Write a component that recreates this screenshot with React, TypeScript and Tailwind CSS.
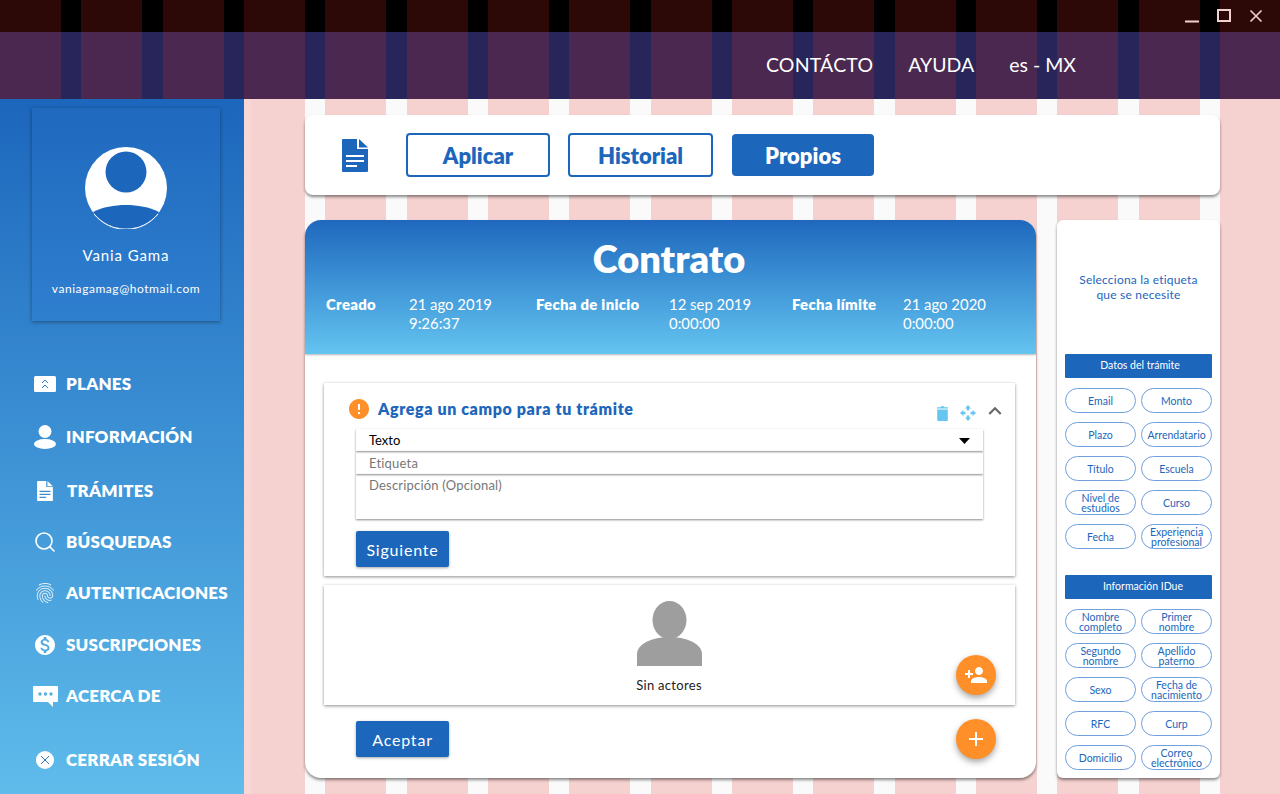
import { Search } from "lucide-react";
import { MdAdd, MdError, MdExpandLess, MdFingerprint, MdMonetizationOn, MdPersonAdd } from "react-icons/md";

const navItems = [
  { label: "PLANES", icon: <PlansIcon />, row: "" },
  { label: "INFORMACIÓN", icon: <PersonIcon />, row: "mt-[13px]" },
  { label: "TRÁMITES", icon: <DocIcon size="h-[20px] w-[16px]" body="#fff" lines="#3b8ad4" />, row: "mt-[14px] pl-[1px]" },
  { label: "BÚSQUEDAS", icon: <Search size={24} strokeWidth={1.6} />, row: "mt-[11px]" },
  { label: "AUTENTICACIONES", icon: <MdFingerprint size={24} className="opacity-80" />, row: "mt-[11px]" },
  { label: "SUSCRIPCIONES", icon: <MdMonetizationOn size={24} />, row: "mt-[12px]" },
  { label: "ACERCA DE", icon: <ChatIcon />, row: "mt-[11px]" },
  { label: "CERRAR SESIÓN", icon: <CloseCircle />, row: "mt-[24px]" },
];

const tramiteTags = ["Email", "Monto", "Plazo", "Arrendatario", "Título", "Escuela", "Nivel de estudios", "Curso", "Fecha", "Experiencia profesional"];
const idueTags = ["Nombre completo", "Primer nombre", "Segundo nombre", "Apellido paterno", "Sexo", "Fecha de nacimiento", "RFC", "Curp", "Domicilio", "Correo electrónico"];

function DocIcon({ size, body, lines }: { size: string; body: string; lines: string }) {
  return (
    <svg viewBox="0 0 26 33" className={size}>
      <path d="M1 0h14v10h11v22a1 1 0 0 1-1 1H1a1 1 0 0 1-1-1V1a1 1 0 0 1 1-1z" fill={body} />
      <path d="M17 0l9 8.5h-9z" fill={body} />
      <path d="M4 16h18v2H4zM4 21h18v2H4zM4 26h11v2H4z" fill={lines} />
    </svg>
  );
}

function PlansIcon() {
  return (
    <svg width="22" height="16" viewBox="0 0 22 16">
      <rect width="22" height="16" rx="1.5" fill="#fff" />
      <path d="M8 7l3-3 3 3M8 12l3-3 3 3" fill="none" stroke="#2f7fcf" strokeWidth="1" />
    </svg>
  );
}

function PersonIcon() {
  return (
    <svg width="22" height="24" viewBox="0 0 22 24" fill="#fff">
      <circle cx="11" cy="6.5" r="6.5" />
      <ellipse cx="11" cy="19" rx="11" ry="5" />
    </svg>
  );
}

function ChatIcon() {
  return (
    <svg width="25" height="21" viewBox="0 0 25 21">
      <path d="M1 0h23a1 1 0 0 1 1 1v14a1 1 0 0 1-1 1h-4v5l-5-5H1a1 1 0 0 1-1-1V1a1 1 0 0 1 1-1z" fill="#fff" />
      <circle cx="7" cy="8" r="1.7" fill="#57aee3" />
      <circle cx="12.5" cy="8" r="1.7" fill="#57aee3" />
      <circle cx="18" cy="8" r="1.7" fill="#57aee3" />
    </svg>
  );
}

function CloseCircle() {
  return (
    <svg width="18" height="18" viewBox="0 0 18 18">
      <circle cx="9" cy="9" r="9" fill="#fff" />
      <path d="M5 5l8 8M13 5l-8 8" stroke="#2f74c8" strokeWidth="1" />
    </svg>
  );
}

function MoveIcon() {
  return (
    <svg width="16" height="16" viewBox="0 0 16 16" fill="#66c6f1">
      <path d="M8 0l3 3.4H9.2v2H6.8v-2H5zM8 16l-3-3.4h1.8v-2h2.4v2H11zM0 8l3.4-3v1.8h2v2.4h-2V11zM16 8l-3.4 3V9.2h-2V6.8h2V5z" />
    </svg>
  );
}

function TrashIcon() {
  return (
    <svg width="11" height="15" viewBox="0 0 11 15" fill="#66c6f1">
      <path d="M0 1.2h3.5L4 .3h3l.5.9H11v1.3H0zM.2 3.4h10.6V14a1 1 0 0 1-1 1H1.2a1 1 0 0 1-1-1z" />
    </svg>
  );
}

function Avatar() {
  return (
    <svg width="82" height="82" viewBox="0 0 82 82">
      <circle cx="41" cy="41" r="41" fill="#fff" />
      <circle cx="41" cy="25" r="20.5" fill="#1c66bc" />
      <path d="M8 65c10-5 21-7 33-7s23 2 33 7a41 41 0 0 1-66 0z" fill="#1c66bc" />
      <path d="M9 67a41 41 0 0 0 64 0" fill="none" stroke="#fff" strokeWidth="1" />
    </svg>
  );
}

function Tag({ text }: { text: string }) {
  return (
    <div className="flex h-[25px] items-center justify-center rounded-full border-[1.5px] border-[#6f9fdc] px-[8px] text-center text-[10.5px] leading-[10px] text-[#1c66bc]">
      <span>{text}</span>
    </div>
  );
}

function TagGroup({ title, tags, shift }: { title: string; tags: string[]; shift: string }) {
  return (
    <div>
      <div className={`flex h-[24px] items-center justify-center rounded-[1px] bg-[#1c66bc] text-[10.5px] text-white ${shift}`}>{title}</div>
      <div className="mt-[10px] grid grid-cols-2 gap-x-[5px] gap-y-[9px]">
        {tags.map((t) => (
          <Tag key={t} text={t} />
        ))}
      </div>
    </div>
  );
}

function Fab({ children }: { children: React.ReactNode }) {
  return (
    <div className="flex h-[40px] w-[40px] items-center justify-center rounded-full bg-[#ff8f28] text-white shadow-[0_3px_6px_rgba(0,0,0,0.35)]">
      {children}
    </div>
  );
}

export default function App() {
  return (
    <div
      className="flex h-[794px] w-[1280px] flex-col overflow-hidden bg-[repeating-linear-gradient(90deg,#f5d2d0_0,#f5d2d0_61px,#fafafa_61px,#fafafa_81.33px)]"
      style={{ fontFamily: "Lato, 'Liberation Sans', sans-serif" }}
    >
      {/* window bar */}
      <div className="flex h-[32px] items-center justify-end bg-[repeating-linear-gradient(90deg,#2c0806_0,#2c0806_61px,#000_61px,#000_81.33px)] text-[#f2d2ce]">
        <svg width="14" height="14" viewBox="0 0 14 14" className="mr-[18px]"><path d="M0 12.5h14" stroke="currentColor" strokeWidth="2" /></svg>
        <svg width="14" height="14" viewBox="0 0 14 14" className="mr-[18px]"><path d="M1 1h12v11H1z" fill="none" stroke="currentColor" strokeWidth="2" /></svg>
        <svg width="14" height="14" viewBox="0 0 14 14" className="mr-[17px]"><path d="M1.5 1.5l11 11M12.5 1.5l-11 11" stroke="currentColor" strokeWidth="1.6" /></svg>
      </div>

      {/* top menu */}
      <div className="flex h-[67px] items-center justify-end gap-[35px] bg-[repeating-linear-gradient(90deg,#4b2850_0,#4b2850_61px,#28255a_61px,#28255a_81.33px)] pb-[2px] pr-[204px] text-[19.5px] text-white">
        <span className="tracking-[0.2px]">CONTÁCTO</span>
        <span>AYUDA</span>
        <span>es - MX</span>
      </div>

      <div className="flex min-h-0 flex-1">
        {/* sidebar */}
        <aside className="flex w-[244px] shrink-0 flex-col bg-gradient-to-b from-[#1c66bc] to-[#5fbceb] pt-[9px] text-white">
          <div className="ml-[32px] flex h-[213px] w-[188px] flex-col items-center bg-gradient-to-b from-[#1f69be] to-[#2f7fcf] pt-[39px] shadow-[0_1px_4px_rgba(0,0,0,0.4)]">
            <Avatar />
            <div className="mt-[15px] text-[15px] tracking-[0.9px]">Vania Gama</div>
            <div className="mt-[13px] text-[12px] tracking-[0.55px]">vaniagamag@hotmail.com</div>
          </div>
          <nav className="mt-[43px] pl-[66px]">
            {navItems.map((n) => (
              <div key={n.label} className={`relative flex h-[40px] items-center text-[17px] font-extrabold tracking-[0.2px] ${n.row}`}>
                <span className="absolute left-[-36px] flex w-[30px] items-center justify-center">{n.icon}</span>
                {n.label}
              </div>
            ))}
          </nav>
        </aside>
        <div className="w-[7px] shrink-0 bg-[#f9d7d5]" />

        {/* main */}
        <main className="min-w-0 flex-1 pl-[54px] pr-[60px] pt-[16px]">
          <div className="flex h-[80px] items-center rounded-lg bg-white pl-[37px] shadow-[0_2px_3px_rgba(0,0,0,0.45)]">
            <DocIcon size="h-[33px] w-[26px]" body="#1c66bc" lines="#fff" />
            <button className="ml-[38px] h-[44px] w-[144px] rounded border-2 border-[#1c66bc] text-[22px] font-extrabold text-[#1c66bc]">Aplicar</button>
            <button className="ml-[18px] h-[44px] w-[145px] rounded border-2 border-[#1c66bc] text-[22px] font-extrabold text-[#1c66bc]">Historial</button>
            <button className="ml-[19px] h-[42px] w-[142px] rounded bg-[#1c66bc] text-[22px] font-extrabold text-white">Propios</button>
          </div>

          <div className="mt-[25px] flex gap-[21px]">
            {/* contract */}
            <section className="h-[558px] w-[731px] shrink-0 overflow-hidden rounded-2xl bg-white shadow-[0_2px_3px_rgba(0,0,0,0.45)]">
              <header className="h-[134px] bg-gradient-to-b from-[#1f68bd] to-[#64c4f0] pl-[21px] text-white shadow-[0_1px_2px_rgba(0,0,0,0.3)]">
                <h1 className="pr-[24px] pt-[15px] text-center text-[38px] font-extrabold leading-[46px]">Contrato</h1>
                <div className="mt-[14px] grid grid-cols-[83px_127px_133px_123px_111px_1fr] text-[14.9px] leading-[19px]">
                  <b className="font-extrabold tracking-[0.3px]">Creado</b>
                  <span>21 ago 2019<br />9:26:37</span>
                  <b className="font-extrabold tracking-[0.3px]">Fecha de inicio</b>
                  <span>12 sep 2019<br />0:00:00</span>
                  <b className="font-extrabold tracking-[0.3px]">Fecha límite</b>
                  <span>21 ago 2020<br />0:00:00</span>
                </div>
              </header>

              <div className="px-[19px] pt-[29px] pr-[21px]">
                {/* add field */}
                <div className="h-[193px] bg-white pl-[32px] pr-[32px] shadow-[0_1px_3px_rgba(0,0,0,0.45)]">
                  <div className="relative flex h-[46px] items-center">
                    <MdError size={24} className="absolute left-[-9px] top-[14px] text-[#ff8f28]" />
                    <span className="ml-[22px] pt-[6px] text-[16px] font-extrabold tracking-[0.62px] text-[#1c66bc]">Agrega un campo para tu trámite</span>
                    <span className="absolute right-[-24.5px] top-[17px] flex items-center">
                      <TrashIcon />
                      <span className="ml-[12px]"><MoveIcon /></span>
                      <MdExpandLess size={26} className="ml-[5.5px] -translate-y-[2px] text-[#666]" />
                    </span>
                  </div>
                  <div className="flex h-[22px] items-center justify-between pl-[13px] pr-[13px] pt-[1px] text-[13px] text-black shadow-[0_1px_2px_rgba(0,0,0,0.45)]">
                    Texto
                    <svg width="11" height="6" viewBox="0 0 11 6"><path d="M0 0h11L5.5 6z" /></svg>
                  </div>
                  <div className="flex h-[23px] items-center pl-[13px] pt-[3px] text-[13px] tracking-[0.2px] text-[#777] shadow-[0_1px_2px_rgba(0,0,0,0.45)]">Etiqueta</div>
                  <div className="h-[45px] pl-[13px] pt-[2px] text-[13px] tracking-[0.2px] text-[#777] shadow-[0_1px_2px_rgba(0,0,0,0.45)]">Descripción (Opcional)</div>
                  <button className="mt-[12px] h-[36px] w-[93px] rounded-[2px] bg-[#1c66bc] pt-[2px] text-[16px] tracking-[0.8px] text-white shadow-[0_1px_3px_rgba(0,0,0,0.35)]">Siguiente</button>
                </div>

                {/* actors */}
                <div className="relative mt-[9px] flex h-[120px] flex-col items-center bg-white pt-[16px] shadow-[0_1px_3px_rgba(0,0,0,0.45)]">
                  <svg width="65" height="65" viewBox="0 0 65 65" fill="#9e9e9e">
                    <ellipse cx="32.5" cy="19" rx="17" ry="19" />
                    <path d="M0 65V53c0-10 15-17 32.5-17S65 43 65 53v12z" />
                  </svg>
                  <span className="mt-[10px] pr-[1px] text-[13px] tracking-[0.3px] text-[#222]">Sin actores</span>
                  <div className="absolute right-[19px] top-[70px]">
                    <Fab><MdPersonAdd size={24} /></Fab>
                  </div>
                </div>

                <div className="mt-[14px] flex items-start justify-between pl-[32px] pr-[19px]">
                  <button className="mt-[2px] h-[36px] w-[93px] rounded-[2px] bg-[#1c66bc] pt-[2px] text-[16px] tracking-[0.8px] text-white shadow-[0_1px_3px_rgba(0,0,0,0.35)]">Aceptar</button>
                  <Fab><MdAdd size={24} /></Fab>
                </div>
              </div>
            </section>

            {/* tags */}
            <section className="h-[558px] w-[163px] shrink-0 rounded-md bg-white px-[8px] shadow-[0_2px_3px_rgba(0,0,0,0.45)]">
              <div className="flex h-[134px] items-center justify-center text-center text-[12px] leading-[15px] tracking-[0.2px] text-[#1c66bc]">
                <span>Selecciona la etiqueta<br />que se necesite</span>
              </div>
              <TagGroup title="Datos del trámite" tags={tramiteTags} shift="pl-[3px]" />
              <div className="h-[26px]" />
              <TagGroup title="Información IDue" tags={idueTags} shift="pl-[9px]" />
            </section>
          </div>
        </main>
      </div>
    </div>
  );
}
